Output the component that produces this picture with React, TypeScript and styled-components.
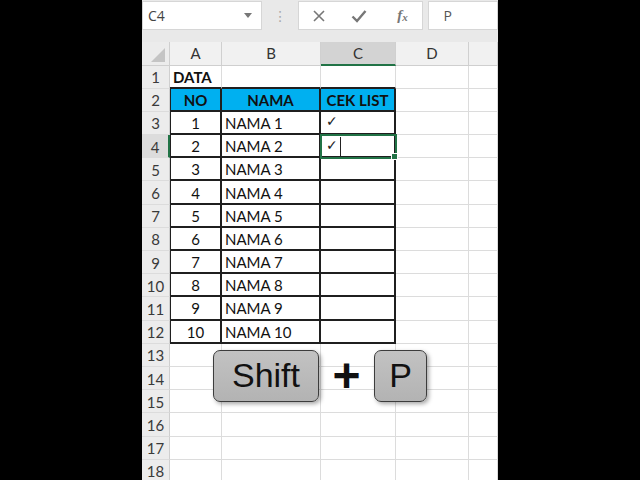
import React from "react";
import styled, { createGlobalStyle, css } from "styled-components";

const Global = createGlobalStyle`
  html, body { margin: 0; padding: 0; background: #000; overflow: hidden; }
  #root { width: 640px; height: 480px; }
`;

const Frame = styled.div`
  width: 356px;
  height: 480px;
  margin: 0 auto;
  background: #e8e8e8;
  overflow: hidden;
  display: flex;
  flex-direction: column;
  font-family: Lato, "Open Sans", sans-serif;
`;

const FormulaBar = styled.div`
  height: 42px;
  flex: none;
  display: flex;
  align-items: flex-start;
  padding-top: 1px;
  box-sizing: border-box;
  background: #e9e9e9;
`;

const Box = styled.div<{ $w: number; $ml?: number }>`
  width: ${(p) => p.$w}px;
  margin-left: ${(p) => p.$ml ?? 0}px;
  height: 29px;
  background: #fff;
  border: 1px solid #d6d6d6;
  box-sizing: border-box;
  display: flex;
  align-items: center;
  color: #444;
  font-family: "Open Sans", Lato, sans-serif;
  font-size: 14px;
`;

const NameText = styled.span`
  flex: 1;
  padding-left: 5px;
`;

const Caret = styled.span`
  width: 0;
  height: 0;
  border-left: 4px solid transparent;
  border-right: 4px solid transparent;
  border-top: 5px solid #777;
  margin-right: 9px;
`;

const Dots = styled.div`
  width: 36px;
  height: 29px;
  display: flex;
  align-items: center;
  justify-content: center;
  color: #aaa;
  font-size: 14px;
  font-family: "DejaVu Sans", sans-serif;
`;

const IconSlot = styled.div<{ $shift?: number }>`
  flex: 1;
  display: flex;
  align-items: center;
  justify-content: center;
  padding-left: ${(p) => p.$shift ?? 0}px;
`;

const Fx = styled.span`
  font-family: "Liberation Serif", serif;
  font-style: italic;
  font-weight: bold;
  font-size: 15px;
  color: #777;
  & > sub { font-size: 11px; vertical-align: -1px; }
`;

const FormulaText = styled.span`
  padding-left: 14px;
  color: #555;
`;

const Sheet = styled.div`
  position: relative;
  flex: 1;
  display: grid;
  grid-template-columns: 28px 52px 99px 75px 73px 29px;
  grid-template-rows: 23.5px repeat(18, 23.2px);
  background: #fff;
  font-size: 15px;
  color: #111;
`;

const Corner = styled.div`
  background: #ececec;
  border-right: 1px solid #cfcfcf;
  border-bottom: 1px solid #cfcfcf;
  box-sizing: border-box;
  display: flex;
  align-items: flex-end;
  justify-content: flex-end;
  padding: 0 4px 3px 0;
  &::after {
    content: "";
    width: 0;
    height: 0;
    border-left: 14px solid transparent;
    border-bottom: 14px solid #c4c4c4;
  }
`;

const ColHead = styled.div<{ $sel?: boolean }>`
  background: ${(p) => (p.$sel ? "#d3d3d3" : "#f1f1f1")};
  border-right: 1px solid #d0d0d0;
  border-bottom: ${(p) => (p.$sel ? "2px solid #217346" : "1px solid #cfcfcf")};
  box-sizing: border-box;
  display: flex;
  align-items: center;
  justify-content: center;
  color: #333;
  font-size: 15px;
`;

const RowHead = styled.div<{ $sel?: boolean }>`
  background: ${(p) => (p.$sel ? "#dcdcdc" : "#ececec")};
  border-right: ${(p) => (p.$sel ? "2px solid #217346" : "1px solid #cfcfcf")};
  border-bottom: 1px solid #dcdcdc;
  box-sizing: border-box;
  display: flex;
  align-items: center;
  justify-content: center;
  padding-top: 1px;
  color: #3a3a3a;
  font-size: 15px;
`;

const Cell = styled.div<{
  $bold?: boolean;
  $center?: boolean;
  $fill?: string;
  $boxed?: boolean;
  $leftEdge?: boolean;
  $underTable?: boolean;
  $sel?: boolean;
}>`
  position: relative;
  box-sizing: border-box;
  display: flex;
  align-items: center;
  justify-content: ${(p) => (p.$center ? "center" : "flex-start")};
  padding: 1px 3px 0;
  white-space: nowrap;
  font-weight: ${(p) => (p.$bold ? 700 : 400)};
  background: ${(p) => p.$fill ?? "#fff"};
  border-right: 1px solid #dcdcdc;
  border-bottom: 1px solid #dcdcdc;
  ${(p) =>
    p.$boxed &&
    css`
      border-right: 2px solid #1f1f1f;
      border-bottom: 2px solid #1f1f1f;
    `}
  ${(p) =>
    p.$leftEdge &&
    css`
      border-left: 1px solid #1f1f1f;
    `}
  ${(p) =>
    p.$underTable &&
    css`
      border-bottom: 2px solid #1f1f1f;
    `}
  ${(p) =>
    p.$sel &&
    css`
      outline: 2px solid #217346;
      outline-offset: -1px;
      z-index: 2;
      &::after {
        content: "";
        position: absolute;
        right: -4px;
        bottom: -4px;
        width: 5px;
        height: 5px;
        background: #217346;
        border: 1px solid #fff;
      }
    `}
`;

const Check = styled.span`
  font-family: "DejaVu Sans", sans-serif;
  font-size: 14px;
  padding-left: 2px;
  color: #222;
  margin-top: -3px;
`;

const TextCursor = styled.span`
  display: inline-block;
  width: 1.5px;
  height: 19px;
  background: #222;
  margin-left: 2px;
`;

const KeyLayer = styled.div`
  position: absolute;
  left: 71px;
  top: 308px;
  display: flex;
  align-items: center;
`;

const Key = styled.div<{ $w: number }>`
  width: ${(p) => p.$w}px;
  height: 52px;
  box-sizing: border-box;
  border: 1.5px solid #3c3c3c;
  border-radius: 7px;
  background: linear-gradient(#c2c2c2, #b3b3b3);
  box-shadow: 2px 2px 4px rgba(0, 0, 0, 0.35);
  display: flex;
  align-items: center;
  justify-content: center;
  font-family: "Liberation Sans", Arial, sans-serif;
  font-size: 34px;
  color: #111;
  padding-bottom: 1px;
`;

const Plus = styled.div`
  width: 55px;
  text-align: center;
  font-family: "Liberation Sans", Arial, sans-serif;
  font-weight: 700;
  font-size: 48px;
  line-height: 52px;
  color: #111;
`;

const cols = ["A", "B", "C", "D", "E"];

export default function App() {
  const rows: React.ReactNode[] = [];
  for (let r = 1; r <= 18; r++) {
    const inTable = r >= 2 && r <= 12;
    rows.push(<RowHead key={`h${r}`} $sel={r === 4}>{r}</RowHead>);
    if (r === 1) {
      rows.push(<Cell key={`a${r}`} $bold $underTable>DATA</Cell>);
      rows.push(<Cell key={`b${r}`} $underTable />);
      rows.push(<Cell key={`c${r}`} $underTable />);
    } else if (r === 2) {
      rows.push(<Cell key={`a${r}`} $bold $center $fill="#00b0f0" $boxed $leftEdge>NO</Cell>);
      rows.push(<Cell key={`b${r}`} $bold $center $fill="#00b0f0" $boxed>NAMA</Cell>);
      rows.push(<Cell key={`c${r}`} $bold $center $fill="#00b0f0" $boxed>CEK LIST</Cell>);
    } else if (inTable) {
      const n = r - 2;
      rows.push(<Cell key={`a${r}`} $center $boxed $leftEdge>{n}</Cell>);
      rows.push(<Cell key={`b${r}`} $boxed>NAMA {n}</Cell>);
      rows.push(
        <Cell key={`c${r}`} $boxed $sel={r === 4}>
          {r === 3 && <Check>✓</Check>}
          {r === 4 && (
            <>
              <Check>✓</Check>
              <TextCursor />
            </>
          )}
        </Cell>
      );
    } else {
      rows.push(<Cell key={`a${r}`} />);
      rows.push(<Cell key={`b${r}`} />);
      rows.push(<Cell key={`c${r}`} />);
    }
    rows.push(<Cell key={`d${r}`} />);
    rows.push(<Cell key={`e${r}`} />);
  }

  return (
    <>
      <Global />
      <Frame>
        <FormulaBar>
          <Box $w={121}>
            <NameText>C4</NameText>
            <Caret />
          </Box>
          <Dots>⋮</Dots>
          <Box $w={126}>
            <IconSlot>
              <svg width="14" height="14" viewBox="0 0 14 14">
                <path d="M2 2 L12 12 M12 2 L2 12" stroke="#777" strokeWidth="1.6" fill="none" />
              </svg>
            </IconSlot>
            <IconSlot>
              <svg width="16" height="14" viewBox="0 0 16 14">
                <path d="M1.5 7.5 L6 12 L14.5 2" stroke="#777" strokeWidth="2.4" fill="none" />
              </svg>
            </IconSlot>
            <IconSlot $shift={4}>
              <Fx>
                f<sub>x</sub>
              </Fx>
            </IconSlot>
          </Box>
          <Box $w={70} $ml={5}>
            <FormulaText>P</FormulaText>
          </Box>
        </FormulaBar>
        <Sheet>
          <Corner />
          {cols.map((c) => (
            <ColHead key={c} $sel={c === "C"}>
              {c === "E" ? "" : c}
            </ColHead>
          ))}
          {rows}
          <KeyLayer>
            <Key $w={106}>Shift</Key>
            <Plus>+</Plus>
            <Key $w={53}>P</Key>
          </KeyLayer>
        </Sheet>
      </Frame>
    </>
  );
}
